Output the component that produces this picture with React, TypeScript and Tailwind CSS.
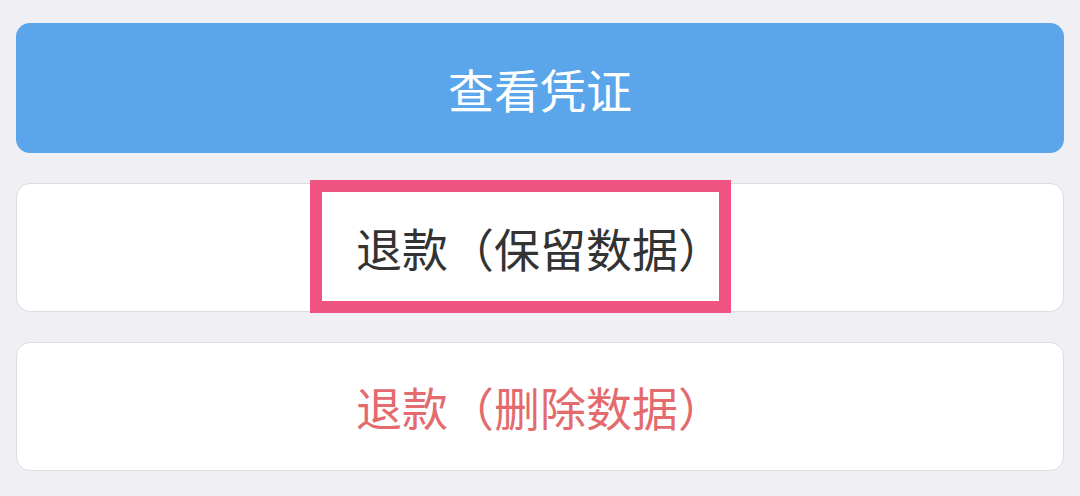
export default function App() {
  const font = { fontFamily: '"Noto Sans CJK SC", "Noto Sans", sans-serif' }

  return (
    <div
      className="flex h-[496px] w-[1080px] flex-col gap-[30px] bg-[#efeff4] px-4 pt-[23px]"
      style={font}
    >
      <button className="flex h-[130px] w-full items-center justify-center rounded-[14px] bg-[#5ba6eb] text-[46px] text-white">
        查看凭证
      </button>

      <button className="relative flex h-[129px] w-full items-center justify-center rounded-[14px] border border-[#dcdce1] bg-white text-[46px] text-[#333333]">
        退款（保留数据）
        {/* annotation box */}
        <span className="pointer-events-none absolute left-[293px] top-[-4px] h-[133px] w-[421px] border-[12px] border-[#ef5382]" />
      </button>

      <button className="flex h-[129px] w-full items-center justify-center rounded-[14px] border border-[#dcdce1] bg-white text-[46px] text-[#e36b6e]">
        退款（删除数据）
      </button>
    </div>
  )
}
